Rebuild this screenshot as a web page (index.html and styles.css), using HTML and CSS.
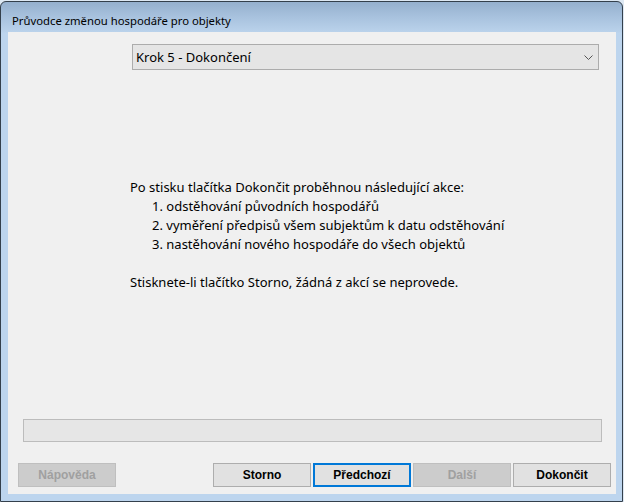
FILE: index.html
```html
<!DOCTYPE html>
<html lang="cs">
<head>
<meta charset="utf-8">
<title>Průvodce změnou hospodáře pro objekty</title>
<link rel="stylesheet" href="styles.css">
</head>
<body>
<div class="window">
  <div class="titlebar">Průvodce změnou hospodáře pro objekty</div>
  <div class="client">
    <div class="combo">
      <span class="combo-text">Krok 5 - Dokončení</span>
      <svg class="chevron" width="9" height="5" viewBox="0 0 9 5"><path d="M0.5 0.5 L4.5 4.5 L8.5 0.5" fill="none" stroke="#555" stroke-width="1"/></svg>
    </div>
    <div class="info">
      <div>Po stisku tlačítka Dokončit proběhnou následující akce:</div>
      <div class="item">1. odstěhování původních hospodářů</div>
      <div class="item">2. vyměření předpisů všem subjektům k datu odstěhování</div>
      <div class="item">3. nastěhování nového hospodáře do všech objektů</div>
      <div class="blank">&nbsp;</div>
      <div>Stisknete-li tlačítko Storno, žádná z akcí se neprovede.</div>
    </div>
    <div class="progress"></div>
    <div class="buttons">
      <button class="btn disabled">Nápověda</button>
      <button class="btn push">Storno</button>
      <button class="btn focused">Předchozí</button>
      <button class="btn disabled">Další</button>
      <button class="btn">Dokončit</button>
    </div>
  </div>
</div>
</body>
</html>
```
FILE: styles.css
```css
html, body {
  margin: 0;
  padding: 0;
}
body {
  width: 624px;
  height: 502px;
  background: #dde8f3;
  overflow: hidden;
  font-family: "Noto Sans", "Open Sans", sans-serif;
  font-size: 13px;
  color: #000;
}
.window {
  box-sizing: border-box;
  margin-top: 1px;
  width: 623px;
  height: 501px;
  border: 1px solid #34404c;
  border-radius: 6px 6px 0 0;
  background: linear-gradient(to bottom, #95b0ce 0px, #a8c2de 15px, #bad2eb 30px, #bdd5ee 31px, #bdd5ee 100%);
  display: flex;
  flex-direction: column;
}
.titlebar {
  height: 30px;
  box-sizing: border-box;
  padding: 10px 0 0 11px;
  line-height: 18px;
  font-size: 11.3px;
  color: #000;
  white-space: nowrap;
}
.client {
  margin: 0 6px 7px 7px;
  flex: 1;
  background: #f0f0f0;
  display: flex;
  flex-direction: column;
  padding-bottom: 7px;
  box-sizing: border-box;
}
.combo {
  margin: 12px 17px 0 124px;
  height: 26px;
  box-sizing: border-box;
  border: 1px solid #acacac;
  background: #e5e5e5;
  display: flex;
  align-items: center;
  padding: 0 5px 0 3px;
}
.combo-text {
  flex: 1;
  font-size: 13px;
  line-height: 24px;
}
.chevron {
  display: block;
}
.info {
  margin: 108px 0 0 122px;
  line-height: 19px;
  white-space: nowrap;
}
.item {
  padding-left: 22px;
}
.progress {
  margin: auto 14px 0 15px;
  height: 23px;
  box-sizing: border-box;
  border: 1px solid #bcbcbc;
  background: #e6e6e6;
}
.buttons {
  margin-top: 21px;
  padding: 0 5px 0 10px;
  display: flex;
  gap: 2px;
}
.btn {
  width: 98px;
  height: 24px;
  box-sizing: border-box;
  margin: 0;
  padding: 0;
  border: 1px solid #adadad;
  background: #e1e1e1;
  font-family: "Liberation Sans", Arial, sans-serif;
  font-weight: bold;
  font-size: 12px;
  color: #000;
}
.btn.push {
  margin-left: auto;
}
.btn.disabled {
  background: #cccccc;
  border-color: #bfbfbf;
  color: #a0a0a0;
}
.btn.focused {
  border: 2px solid #0078d7;
}
```
